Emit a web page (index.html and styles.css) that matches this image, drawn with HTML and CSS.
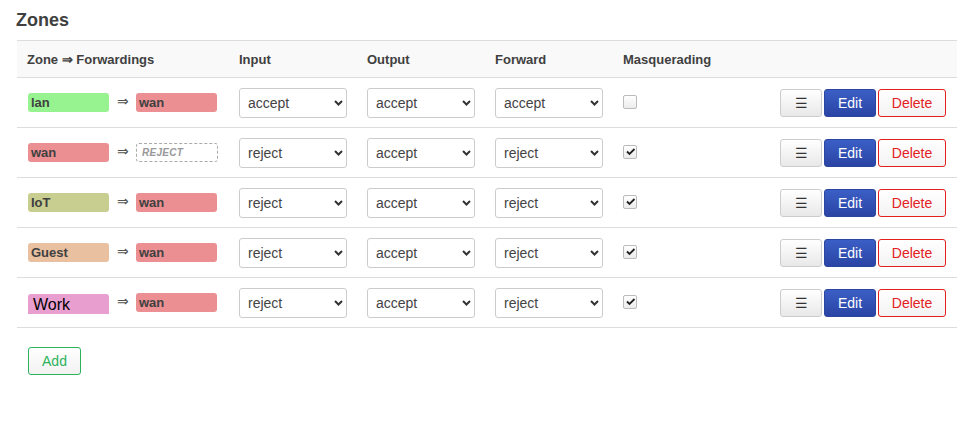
FILE: index.html
```html
<!DOCTYPE html>
<html>
<head>
<meta charset="utf-8">
<link rel="stylesheet" href="styles.css">
</head>
<body>
<div class="page">
  <h2 class="title">Zones</h2>
  <div class="table">
    <div class="row head">
      <div class="cell c1">Zone ⇒ Forwardings</div>
      <div class="cell">Input</div>
      <div class="cell">Output</div>
      <div class="cell">Forward</div>
      <div class="cell">Masquerading</div>
      <div class="cell"></div>
    </div>

    <div class="row">
      <div class="cell c1 fw"><span class="badge lan">lan</span><span class="arrow">⇒</span><span class="badge wan">wan</span></div>
      <div class="cell"><div class="select"><span>accept</span><svg width="9" height="6" viewBox="0 0 9 6"><path d="M1 1l3.5 3.5L8 1" fill="none" stroke="#333" stroke-width="2"/></svg></div></div>
      <div class="cell"><div class="select"><span>accept</span><svg width="9" height="6" viewBox="0 0 9 6"><path d="M1 1l3.5 3.5L8 1" fill="none" stroke="#333" stroke-width="2"/></svg></div></div>
      <div class="cell"><div class="select"><span>accept</span><svg width="9" height="6" viewBox="0 0 9 6"><path d="M1 1l3.5 3.5L8 1" fill="none" stroke="#333" stroke-width="2"/></svg></div></div>
      <div class="cell chk"><span class="checkbox"></span></div>
      <div class="cell actions"><button class="btn menu">☰</button><button class="btn edit">Edit</button><button class="btn del">Delete</button></div>
    </div>

    <div class="row">
      <div class="cell c1 fw"><span class="badge wan">wan</span><span class="arrow">⇒</span><span class="badge reject">REJECT</span></div>
      <div class="cell"><div class="select"><span>reject</span><svg width="9" height="6" viewBox="0 0 9 6"><path d="M1 1l3.5 3.5L8 1" fill="none" stroke="#333" stroke-width="2"/></svg></div></div>
      <div class="cell"><div class="select"><span>accept</span><svg width="9" height="6" viewBox="0 0 9 6"><path d="M1 1l3.5 3.5L8 1" fill="none" stroke="#333" stroke-width="2"/></svg></div></div>
      <div class="cell"><div class="select"><span>reject</span><svg width="9" height="6" viewBox="0 0 9 6"><path d="M1 1l3.5 3.5L8 1" fill="none" stroke="#333" stroke-width="2"/></svg></div></div>
      <div class="cell chk"><span class="checkbox"><svg width="11" height="11" viewBox="0 0 11 11"><path d="M2 5.5l2.5 2.5L9.5 3" fill="none" stroke="#222" stroke-width="1.8"/></svg></span></div>
      <div class="cell actions"><button class="btn menu">☰</button><button class="btn edit">Edit</button><button class="btn del">Delete</button></div>
    </div>

    <div class="row">
      <div class="cell c1 fw"><span class="badge iot">IoT</span><span class="arrow">⇒</span><span class="badge wan">wan</span></div>
      <div class="cell"><div class="select"><span>reject</span><svg width="9" height="6" viewBox="0 0 9 6"><path d="M1 1l3.5 3.5L8 1" fill="none" stroke="#333" stroke-width="2"/></svg></div></div>
      <div class="cell"><div class="select"><span>accept</span><svg width="9" height="6" viewBox="0 0 9 6"><path d="M1 1l3.5 3.5L8 1" fill="none" stroke="#333" stroke-width="2"/></svg></div></div>
      <div class="cell"><div class="select"><span>reject</span><svg width="9" height="6" viewBox="0 0 9 6"><path d="M1 1l3.5 3.5L8 1" fill="none" stroke="#333" stroke-width="2"/></svg></div></div>
      <div class="cell chk"><span class="checkbox"><svg width="11" height="11" viewBox="0 0 11 11"><path d="M2 5.5l2.5 2.5L9.5 3" fill="none" stroke="#222" stroke-width="1.8"/></svg></span></div>
      <div class="cell actions"><button class="btn menu">☰</button><button class="btn edit">Edit</button><button class="btn del">Delete</button></div>
    </div>

    <div class="row">
      <div class="cell c1 fw"><span class="badge guest">Guest</span><span class="arrow">⇒</span><span class="badge wan">wan</span></div>
      <div class="cell"><div class="select"><span>reject</span><svg width="9" height="6" viewBox="0 0 9 6"><path d="M1 1l3.5 3.5L8 1" fill="none" stroke="#333" stroke-width="2"/></svg></div></div>
      <div class="cell"><div class="select"><span>accept</span><svg width="9" height="6" viewBox="0 0 9 6"><path d="M1 1l3.5 3.5L8 1" fill="none" stroke="#333" stroke-width="2"/></svg></div></div>
      <div class="cell"><div class="select"><span>reject</span><svg width="9" height="6" viewBox="0 0 9 6"><path d="M1 1l3.5 3.5L8 1" fill="none" stroke="#333" stroke-width="2"/></svg></div></div>
      <div class="cell chk"><span class="checkbox"><svg width="11" height="11" viewBox="0 0 11 11"><path d="M2 5.5l2.5 2.5L9.5 3" fill="none" stroke="#222" stroke-width="1.8"/></svg></span></div>
      <div class="cell actions"><button class="btn menu">☰</button><button class="btn edit">Edit</button><button class="btn del">Delete</button></div>
    </div>

    <div class="row">
      <div class="cell c1 fw"><span class="badge work"><span class="worktext">Work</span></span><span class="arrow">⇒</span><span class="badge wan">wan</span></div>
      <div class="cell"><div class="select"><span>reject</span><svg width="9" height="6" viewBox="0 0 9 6"><path d="M1 1l3.5 3.5L8 1" fill="none" stroke="#333" stroke-width="2"/></svg></div></div>
      <div class="cell"><div class="select"><span>accept</span><svg width="9" height="6" viewBox="0 0 9 6"><path d="M1 1l3.5 3.5L8 1" fill="none" stroke="#333" stroke-width="2"/></svg></div></div>
      <div class="cell"><div class="select"><span>reject</span><svg width="9" height="6" viewBox="0 0 9 6"><path d="M1 1l3.5 3.5L8 1" fill="none" stroke="#333" stroke-width="2"/></svg></div></div>
      <div class="cell chk"><span class="checkbox"><svg width="11" height="11" viewBox="0 0 11 11"><path d="M2 5.5l2.5 2.5L9.5 3" fill="none" stroke="#222" stroke-width="1.8"/></svg></span></div>
      <div class="cell actions"><button class="btn menu">☰</button><button class="btn edit">Edit</button><button class="btn del">Delete</button></div>
    </div>
  </div>
  <div class="add-wrap"><button class="btn add">Add</button></div>
</div>
</body>
</html>
```
FILE: styles.css
```css
* { box-sizing: border-box; }
html, body { margin: 0; padding: 0; background: #fff; }
body { font-family: "Liberation Sans", Arial, sans-serif; color: #404040; font-size: 13px; }
.page { padding: 10px 6px 0 17px; width: 963px; }
.title { margin: 0 0 9px -1px; font-size: 18px; font-weight: bold; line-height: 21px; color: #404040; }
.table { width: 940px; border-top: 1px solid #ddd; }
.row {
  display: grid;
  grid-template-columns: 212px 128px 128px 128px 1fr auto;
  align-items: center;
  height: 50px;
  border-bottom: 1px solid #ddd;
}
.row.head { height: 37px; background: #f9f9f9; font-weight: bold; font-size: 13px; }
.cell { padding: 0 10px; display: flex; align-items: center; }
.c1 { padding-left: 10px; }
.fw { padding-left: 11px; }
.badge {
  display: inline-flex; align-items: center;
  width: 81px; height: 19px; border-radius: 3px;
  padding-left: 3px; font-weight: bold; font-size: 13px; color: #404040;
}
.lan { background: #97f38f; }
.wan { background: #eb8f92; }
.iot { background: #c8ce90; }
.guest { background: #e9c0a0; }
.work { background: #e89fd0; border-radius: 3px 3px 0 0; height: 20px; margin-top: 3px; padding-left: 5px; align-items: flex-end; }
.worktext { font-weight: normal; font-size: 16px; color: #000; line-height: 18px; }
.reject { border: 1px dashed #aaa; background: #fff; color: #999; font-style: italic; font-size: 10px; padding-left: 5px; letter-spacing: 0.3px; width: 82px; }
.arrow { width: 27px; text-align: center; font-size: 14px; color: #555; margin-top: -3px; }
.select {
  width: 108px; height: 30px; border: 1px solid #ccc; border-radius: 3px;
  display: flex; align-items: center; justify-content: space-between;
  padding: 0 3px 0 8px; font-size: 14px; color: #444; background: #fff;
}
.select svg { display: block; }
.chk { padding-bottom: 2px; }
.checkbox {
  width: 14px; height: 14px; border: 1px solid #bbb; border-radius: 2px;
  background: linear-gradient(#fff, #ececec); display: flex; align-items: center; justify-content: center;
}
.checkbox svg { display: block; }
.actions { justify-content: flex-end; gap: 2px; padding-right: 11px; }
.btn {
  font-family: "Liberation Sans", Arial, sans-serif; font-size: 14px;
  height: 28px; border-radius: 3px; padding: 0; cursor: pointer;
}
.menu { width: 42px; border: 1px solid #ccc; background: linear-gradient(#fff, #e8e8e8); color: #333; font-size: 14px; }
.edit { width: 52px; border: 1px solid #2a46a0; background: linear-gradient(#3b5fc6, #2a44a4); color: #fff; }
.del { width: 68px; border: 1px solid #e4201f; background: linear-gradient(#fff, #f3f3f3); color: #e4201f; }
.add-wrap { padding: 19px 0 0 11px; }
.add { width: 53px; border: 1px solid #2cb25a; background: linear-gradient(#fff, #f2f2f2); color: #2cb25a; }
```
